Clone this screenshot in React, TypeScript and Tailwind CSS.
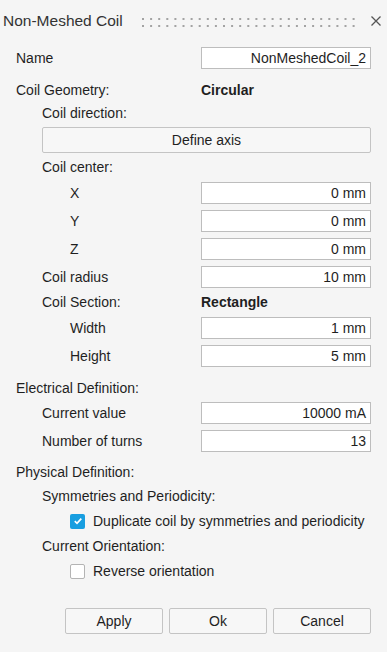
import React from "react";

type FieldProps = { label: string; value: string; indent?: number };

function Field({ label, value, indent = 0 }: FieldProps) {
  const pad = indent === 2 ? "pl-[54px]" : indent === 1 ? "pl-[26px]" : "pl-0";
  return (
    <div className="flex h-[28px] items-center justify-between">
      <span className={pad}>{label}</span>
      <div className="flex h-[22px] w-[170px] items-center justify-end border border-[#bdbdbd] bg-white pr-[4px]">
        {value}
      </div>
    </div>
  );
}

function Label({ text, indent = 0, h }: { text: string; indent?: number; h: string }) {
  const pad = indent === 1 ? "pl-[26px]" : "pl-0";
  return <div className={`flex items-center ${pad} ${h}`}>{text}</div>;
}

function Check({ label, checked }: { label: string; checked?: boolean }) {
  return (
    <div className="flex h-[24px] items-center gap-[8px] pl-[54px]">
      {checked ? (
        <span className="flex h-[15px] w-[15px] items-center justify-center rounded-[2px] bg-[#189ee0]">
          <svg width="10" height="10" viewBox="0 0 10 10">
            <path d="M1.8 5.2 L4 7.3 L8.3 2.6" fill="none" stroke="white" strokeWidth="1.7" />
          </svg>
        </span>
      ) : (
        <span className="h-[15px] w-[15px] rounded-[2px] border border-[#b4b4b4] bg-white" />
      )}
      <span>{label}</span>
    </div>
  );
}

function Dots() {
  const cols = Array.from({ length: 27 }, (_, i) => i);
  return (
    <svg width="214" height="10" viewBox="0 0 214 10" className="block">
      {cols.map((i) => (
        <g key={i} fill="#a3a3a3">
          <rect x={i * 8.1} y={1} width="2" height="2" />
          <rect x={i * 8.1} y={8} width="2" height="2" />
        </g>
      ))}
    </svg>
  );
}

export default function App() {
  return (
    <div className="h-[652px] w-[387px] bg-[#f5f5f5] font-['Liberation_Sans',Arial,sans-serif] text-[14px] text-[#1f1f1f]">
      <div className="flex h-[42px] items-center pl-[3px]">
        <span className="text-[15.5px] text-[#333]">Non-Meshed Coil</span>
        <div className="ml-[19px] mt-[1px]">
          <Dots />
        </div>
        <svg width="12" height="12" viewBox="0 0 12 12" className="ml-[14px]">
          <path d="M1.5 1.5 L10.5 10.5 M10.5 1.5 L1.5 10.5" stroke="#555" strokeWidth="1.3" />
        </svg>
      </div>

      <div className="flex flex-col px-[16px] pt-[2px]">
        <Field label="Name" value="NonMeshedCoil_2" />

        <div className="mt-[7px] flex h-[22px] items-center">
          <span className="w-[185px]">Coil Geometry:</span>
          <span className="font-bold">Circular</span>
        </div>
        <Label text="Coil direction:" indent={1} h="h-[24px]" />
        <button className="ml-[26px] mt-[2px] h-[26px] rounded-[2px] border border-[#c4c4c4] bg-[#f7f7f7]">
          Define axis
        </button>
        <Label text="Coil center:" indent={1} h="mt-[2px] h-[24px]" />
        <Field label="X" value="0 mm" indent={2} />
        <Field label="Y" value="0 mm" indent={2} />
        <Field label="Z" value="0 mm" indent={2} />
        <Field label="Coil radius" value="10 mm" indent={1} />
        <div className="flex h-[23px] items-center">
          <span className="w-[185px] pl-[26px]">Coil Section:</span>
          <span className="font-bold">Rectangle</span>
        </div>
        <Field label="Width" value="1 mm" indent={2} />
        <Field label="Height" value="5 mm" indent={2} />

        <Label text="Electrical Definition:" h="mt-[8px] h-[21px]" />
        <Field label="Current value" value="10000 mA" indent={1} />
        <Field label="Number of turns" value="13" indent={1} />

        <Label text="Physical Definition:" h="mt-[6px] h-[22px]" />
        <Label text="Symmetries and Periodicity:" indent={1} h="h-[26px]" />
        <Check label="Duplicate coil by symmetries and periodicity" checked />
        <Label text="Current Orientation:" indent={1} h="h-[26px]" />
        <Check label="Reverse orientation" />

        <div className="mt-[25px] flex justify-end gap-[6px]">
          {["Apply", "Ok", "Cancel"].map((b) => (
            <button
              key={b}
              className="h-[26px] w-[98px] rounded-[2px] border border-[#c4c4c4] bg-[#f7f7f7]"
            >
              {b}
            </button>
          ))}
        </div>
      </div>
    </div>
  );
}
